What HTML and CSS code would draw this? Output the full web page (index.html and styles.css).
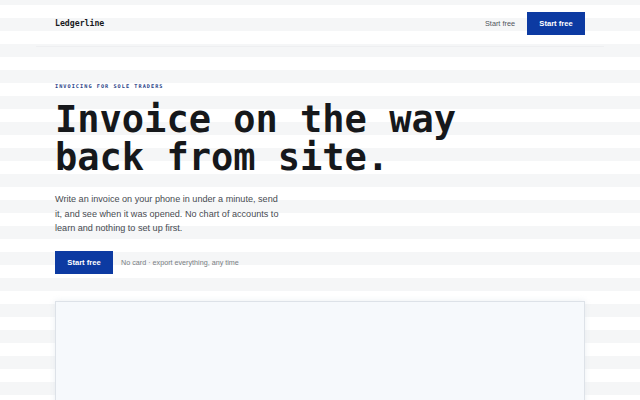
FILE: index.html
```html
<!DOCTYPE html>
<html lang="en">
<head>
<meta charset="utf-8">
<title>Ledgerline</title>
<link rel="stylesheet" href="styles.css">
</head>
<body>
<header class="site-header">
  <div class="logo">Ledgerline</div>
  <nav class="nav">
    <a class="nav-link" href="#">Start free</a>
    <a class="btn" href="#">Start free</a>
  </nav>
</header>
<main class="page">
  <section class="hero">
    <p class="eyebrow">INVOICING FOR SOLE TRADERS</p>
    <h1 class="headline"><span class="line">Invoice on the way</span><span class="line">back from site.</span></h1>
    <p class="lede">Write an invoice on your phone in under a minute, send it, and see when it was opened. No chart of accounts to learn and nothing to set up first.</p>
    <div class="cta">
      <a class="btn" href="#">Start free</a>
      <span class="note">No card · export everything, any time</span>
    </div>
  </section>
  <div class="preview"></div>
</main>
</body>
</html>
```
FILE: styles.css
```css
html, body {
  margin: 0;
  padding: 0;
}
body {
  font-family: "Liberation Sans", Arial, sans-serif;
  color: #1a1d21;
  background: repeating-linear-gradient(
    to bottom,
    #f5f6f7 0 5px,
    #ffffff 5px 18px,
    #f5f6f7 18px 26px
  );
  height: 400px;
  overflow: hidden;
}
a { text-decoration: none; }

.site-header {
  width: 530px;
  margin: 0 auto;
  padding: 0 19px;
  height: 46px;
  border-bottom: 1px solid #eeeff1;
  display: flex;
  align-items: center;
  justify-content: space-between;
}
.logo {
  font-family: "DejaVu Sans Mono", monospace;
  font-weight: bold;
  font-size: 8.2px;
  color: #17191c;
}
.nav {
  display: flex;
  align-items: center;
  gap: 12px;
}
.nav-link {
  font-size: 7.3px;
  color: #50555c;
}
.btn {
  display: inline-flex;
  align-items: center;
  justify-content: center;
  height: 23px;
  width: 58px;
  background: #0c3aa2;
  color: #ffffff;
  font-weight: bold;
  font-size: 7.6px;
}

.page {
  width: 530px;
  margin: 0 auto;
}
.hero {
  padding-top: 35px;
}
.eyebrow {
  margin: 0;
  font-family: "DejaVu Sans Mono", monospace;
  font-weight: bold;
  font-size: 5.2px;
  line-height: 8px;
  letter-spacing: 1.05px;
  color: #1f3e86;
}
.headline {
  margin: 11px 0 0;
  font-family: "DejaVu Sans Mono", monospace;
  font-weight: bold;
  font-size: 37px;
  line-height: 38px;
  color: #16181b;
}
.line {
  display: block;
  height: 38px;
}
.lede {
  margin: 15px 0 0;
  width: 232px;
  font-size: 9.1px;
  line-height: 14.5px;
  color: #474b51;
}
.cta {
  margin-top: 15.5px;
  display: flex;
  align-items: center;
  gap: 8px;
}
.note {
  font-size: 7.2px;
  color: #7a7e84;
}
.preview {
  margin-top: 27px;
  height: 200px;
  background: #f6f9fc;
  border: 1px solid #dde2e8;
  box-shadow: 0 0 6px rgba(220, 226, 234, 0.6);
}
```
